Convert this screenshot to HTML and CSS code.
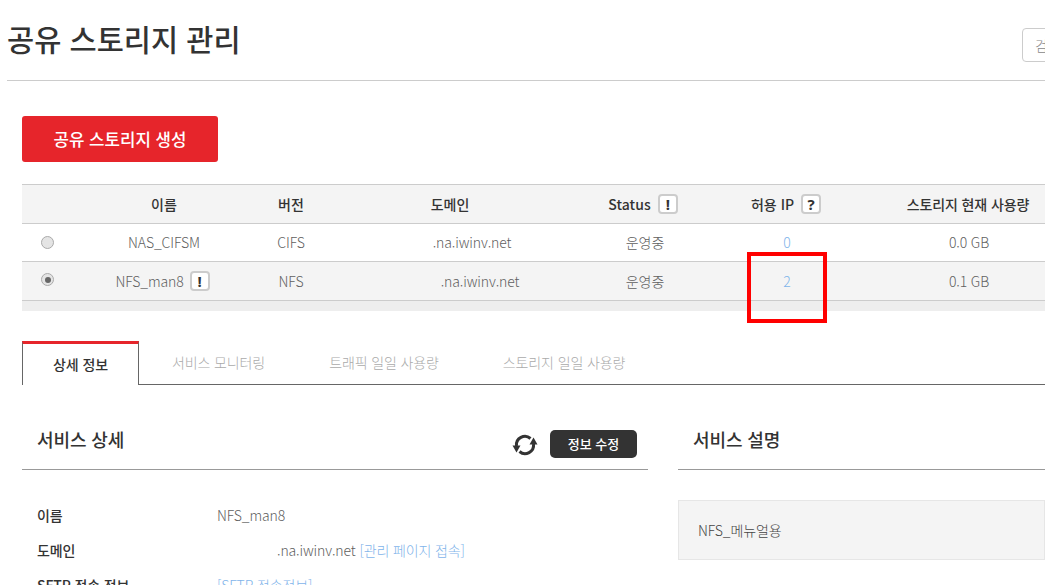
FILE: index.html
```html
<!DOCTYPE html>
<html lang="ko">
<head>
<meta charset="utf-8">
<title>공유 스토리지 관리</title>
<link rel="stylesheet" href="styles.css">
</head>
<body>
<div class="page">
  <header class="page-head">
    <h1>공유 스토리지 관리</h1>
    <div class="search">검</div>
  </header>
  <main class="content">
    <button class="create">공유 스토리지 생성</button>
    <div class="table">
      <div class="row head">
        <div></div>
        <div>이름</div>
        <div>버전</div>
        <div>도메인</div>
        <div class="head-status">Status<span class="hint">!</span></div>
        <div class="head-ip">허용 IP<span class="hint">?</span></div>
        <div class="head-usage">스토리지 현재 사용량</div>
      </div>
      <div class="row">
        <div class="radio-cell"><span class="radio"></span></div>
        <div>NAS_CIFSM</div>
        <div>CIFS</div>
        <div class="shift-a">.na.iwinv.net</div>
        <div class="state">운영중</div>
        <div class="link">0</div>
        <div class="usage">0.0 GB</div>
      </div>
      <div class="row selected">
        <div class="radio-cell"><span class="radio on"></span></div>
        <div class="name-hint">NFS_man8<span class="hint">!</span></div>
        <div>NFS</div>
        <div class="shift-b">.na.iwinv.net</div>
        <div class="state">운영중</div>
        <div class="link">2</div>
        <div class="usage">0.1 GB</div>
      </div>
      <div class="table-foot"></div>
    </div>
    <nav class="tabs">
      <a class="tab active">상세 정보</a>
      <a class="tab">서비스 모니터링</a>
      <a class="tab">트래픽 일일 사용량</a>
      <a class="tab">스토리지 일일 사용량</a>
    </nav>
    <div class="columns">
      <section class="detail">
        <div class="section-head">
          <h2>서비스 상세</h2>
          <svg class="refresh" viewBox="0 0 26 26" width="26" height="26" aria-hidden="true">
            <path d="M4.5 14A8.5 8.5 0 0 1 18.5 6.5" fill="none" stroke="#333" stroke-width="3"/>
            <path d="M21.5 12A8.5 8.5 0 0 1 7.5 19.5" fill="none" stroke="#333" stroke-width="3"/>
            <path d="M.5 13.5H8.5L4.5 20.5Z" fill="#333"/>
            <path d="M17.5 12.5H25.5L21.5 5.5Z" fill="#333"/>
          </svg>
          <button class="edit">정보 수정</button>
        </div>
        <dl class="info">
          <dt>이름</dt><dd>NFS_man8</dd>
          <dt>도메인</dt><dd><span class="indent">.na.iwinv.net</span> <a class="link">[관리 페이지 접속]</a></dd>
          <dt>SFTP 접속 정보</dt><dd><a class="link">[SFTP 접속정보]</a></dd>
        </dl>
      </section>
      <aside class="desc">
        <div class="section-head"><h2>서비스 설명</h2></div>
        <div class="desc-box">NFS_메뉴얼용</div>
      </aside>
    </div>
  </main>
  <div class="annotation"></div>
</div>
</body>
</html>
```
FILE: styles.css
```css
* { box-sizing: border-box; }
html, body { margin: 0; padding: 0; height: 100%; overflow: hidden; background: #fff; }
body { font-family: "Noto Sans CJK KR", "Noto Sans", sans-serif; color: #606060; font-size: 14px; font-weight: 300; letter-spacing: -0.12px; }
.page { position: relative; width: 1045px; height: 585px; overflow: hidden; }
.page-head { margin-left: 7px; height: 81px; border-bottom: 1px solid #ccc; position: relative; }
h1 { margin: 0; font-size: 29.5px; font-weight: 500; line-height: 44px; padding-top: 16px; color: #333; letter-spacing: 0; }
.search { position: absolute; left: 1015px; top: 28px; width: 60px; height: 34px; border: 1px solid #ccc; border-radius: 4px; padding-left: 12px; line-height: 32px; color: #888; font-size: 14px; }
.content { padding: 35px 0 0 22px; width: 1100px; }
.create { display: block; width: 196px; height: 46px; border: 0; border-radius: 3px; background: #e6252b; color: #fff; font: 500 16.8px/46px "Noto Sans CJK KR", sans-serif; padding: 0; }
.table { margin-top: 22px; width: 1100px; border-top: 1px solid #ccc; }
.row { display: grid; grid-template-columns: 50px 184px 70px 248px 134px 158px 204px; height: 38px; align-items: center; text-align: center; border-bottom: 1px solid #ccc; line-height: 20px; }
.row > div { display: flex; justify-content: center; align-items: center; height: 100%; padding-bottom: 1px; }
.row.head { height: 39px; background: #f4f4f4; color: #333; font-weight: 500; letter-spacing: 0; }
.row.head > div { padding-bottom: 0; }
.row.selected { background: #f4f4f4; height: 39px; padding-top: 1px; }
.row > .head-status { padding-left: 4px; letter-spacing: 0.1px; }
.row > .head-ip { padding-right: 2px; }
.row > .head-usage { letter-spacing: -0.12px; }
.row > .name-hint { padding-right: 3px; }
.row > .shift-a { padding-left: 44px; }
.row > .shift-b { padding-left: 60px; }
.row > .state { padding-left: 8px; }
.row > .usage { padding-left: 2px; }
.row > .radio-cell { justify-content: flex-start; padding-left: 19px; padding-bottom: 1px; }
.row.selected > .radio-cell { padding-bottom: 4px; }
.radio { width: 13px; height: 13px; border-radius: 50%; border: 1px solid #aaa; background: #e4e4e4; position: relative; display: block; }
.radio.on::after { content: ""; position: absolute; left: 2.5px; top: 2.5px; width: 6px; height: 6px; border-radius: 50%; background: #666; }
.hint { display: inline-block; width: 20px; height: 20px; margin-left: 7px; border: 2px solid #ccc; border-radius: 4px; background: #fff; color: #333; font: 700 15px/16px "Noto Sans", sans-serif; text-align: center; letter-spacing: 0; }
.selected .hint { margin-left: 6px; }
.link { color: #7fb4ea; }
.table-foot { height: 10px; background: #eee; }
.tabs { display: flex; margin-top: 30px; width: 1023px; height: 44px; border-bottom: 1px solid #666; }
.tab { height: 43px; line-height: 42px; color: #aaa; padding: 0 32px; white-space: nowrap; }
.tab.active { height: 44px; width: 117px; padding: 0; margin-right: 1px; text-align: center; border: 1px solid #666; border-top: 3px solid #e6252b; border-bottom: 0; background: #fff; color: #333; font-weight: 500; line-height: 41px; }
.columns { display: flex; gap: 30px; width: 1023px; }
.detail { width: 626px; flex: none; }
.desc { flex: 1; }
.section-head { height: 85px; border-bottom: 1px solid #999; display: flex; align-items: center; padding-top: 26px; padding-left: 15px; }
h2 { margin: 0 0 2px; font-size: 18px; font-weight: 500; color: #333; flex: 1; letter-spacing: -0.1px; }
.refresh { margin: 9px 12px 0 0; flex: none; }
.edit { width: 87px; height: 28px; border: 0; border-radius: 5px; background: #333; color: #fff; font: 500 13px/28px "Noto Sans CJK KR", sans-serif; margin: 7px 11px 0 0; padding: 0; }
.info { display: grid; grid-template-columns: 180px 1fr; margin: 35px 0 0 15px; row-gap: 15px; line-height: 20px; }
.info dt { color: #333; font-weight: 500; }
.info dd { margin: 0; }
.indent { padding-left: 60px; }
.desc-box { margin-top: 30px; height: 60px; background: #f4f4f4; border: 1px solid #e6e6e6; padding-left: 19px; line-height: 58px; color: #444; }
.annotation { position: absolute; left: 747px; top: 252px; width: 80px; height: 71px; border: 4px solid #f00; }
```
